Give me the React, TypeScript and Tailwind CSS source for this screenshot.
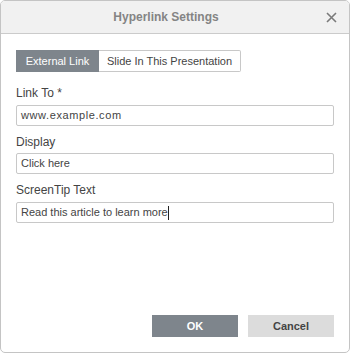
export default function App() {
  const font = { fontFamily: '"Liberation Sans", Arial, sans-serif' };
  return (
    <div style={font} className="w-[350px] h-[353px] bg-white">
      <div className="w-[350px] h-[353px] flex flex-col border border-[#c4c4c4] rounded-[5px] overflow-hidden bg-white">
        <div className="relative h-[33px] shrink-0 bg-[#f1f1f1] border-b border-[#cbcbcb] flex items-center justify-center pr-[18px]">
          <span className="text-[12px] font-bold text-[#848484]">Hyperlink Settings</span>
          <svg className="absolute left-[325px] top-[11px]" width="11" height="11" viewBox="0 0 11 11">
            <path d="M1 1 L10 10 M10 1 L1 10" stroke="#7a7a7a" strokeWidth="1.6" />
          </svg>
        </div>
        <div className="flex-1 flex flex-col px-[15px] pt-[16px]">
          <div className="flex h-[22px]">
            <div className="w-[83px] h-full bg-[#7e858c] text-white text-[11px] flex items-center justify-center">
              External Link
            </div>
            <div className="w-[142px] h-full border border-l-0 border-[#c8c8c8] rounded-r-[2px] text-[#444] text-[11px] flex items-center justify-center">
              Slide In This Presentation
            </div>
          </div>
          <div className="mt-[14px] h-[14px] leading-[14px] text-[12px] text-[#444]">Link To *</div>
          <div className="mt-[5px] h-[21px] w-[318px] border border-[#c8c8c8] rounded-[2px] px-[4px] flex items-center text-[11px] text-[#444] tracking-[0.6px]">
            www.example.com
          </div>
          <div className="mt-[9px] h-[14px] leading-[14px] text-[12px] text-[#444]">Display</div>
          <div className="mt-[4px] h-[21px] w-[318px] border border-[#c8c8c8] rounded-[2px] px-[4px] flex items-center text-[11px] text-[#444]">
            Click here
          </div>
          <div className="mt-[9px] h-[14px] leading-[14px] text-[12px] text-[#444]">ScreenTip Text</div>
          <div className="mt-[5px] h-[21px] w-[318px] border border-[#c8c8c8] rounded-[2px] px-[4px] flex items-center text-[11px] text-[#444]">
            Read this article to learn more
            <span className="inline-block w-px h-[14px] bg-[#222]"></span>
          </div>
          <div className="flex-1" />
          <div className="flex justify-end gap-[10px] pb-[15px]">
            <div className="w-[86px] h-[22px] bg-[#7e858c] text-white text-[11px] font-bold flex items-center justify-center">
              OK
            </div>
            <div className="w-[86px] h-[22px] bg-[#dcdcdc] text-[#444] text-[11px] font-bold flex items-center justify-center">
              Cancel
            </div>
          </div>
        </div>
      </div>
    </div>
  );
}
